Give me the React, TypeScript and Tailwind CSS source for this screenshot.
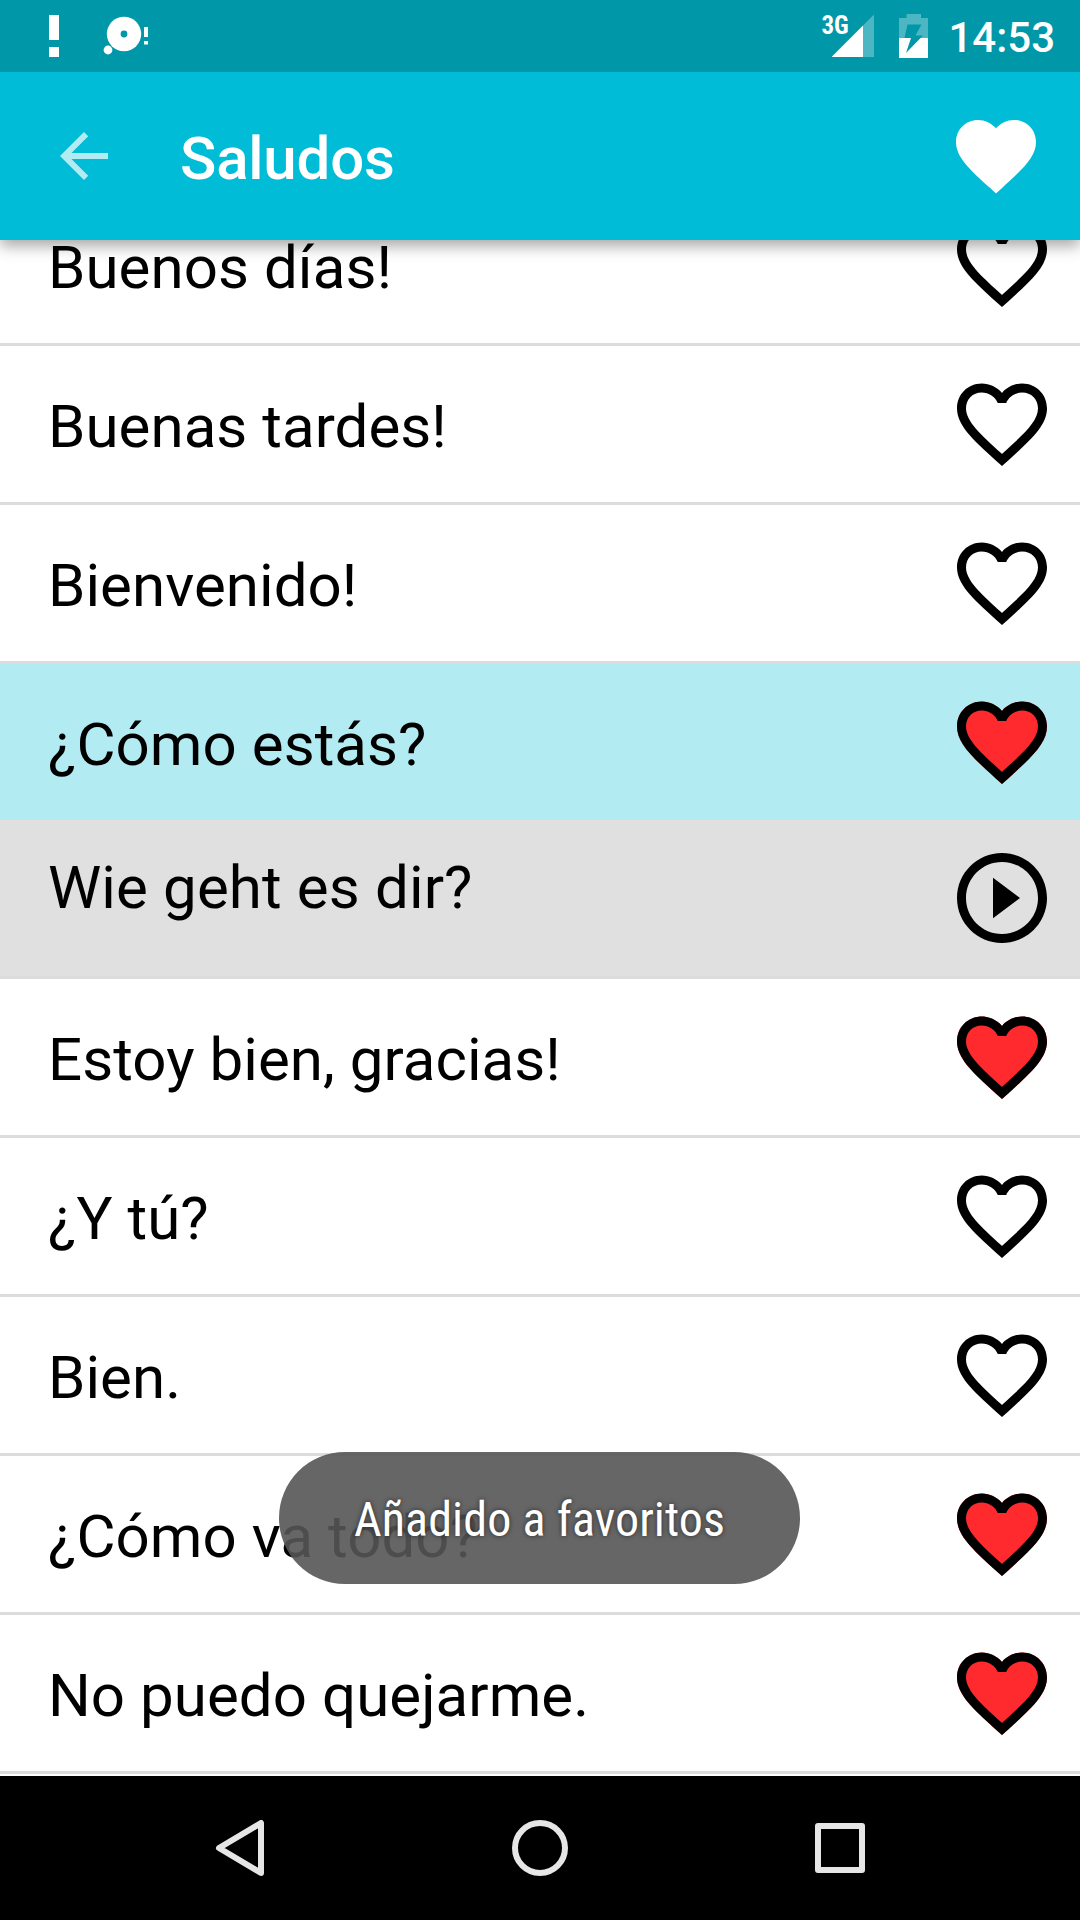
type Phrase = {
  text: string;
  favorite?: boolean;
  selected?: boolean;
  translation?: string;
};

const phrases: Phrase[] = [
  { text: "Buenos días!" },
  { text: "Buenas tardes!" },
  { text: "Bienvenido!" },
  { text: "¿Cómo estás?", favorite: true, selected: true, translation: "Wie geht es dir?" },
  { text: "Estoy bien, gracias!", favorite: true },
  { text: "¿Y tú?" },
  { text: "Bien." },
  { text: "¿Cómo va todo?", favorite: true },
  { text: "No puedo quejarme.", favorite: true },
];

const HEART =
  "M12 21.35l-1.45-1.32C5.4 15.36 2 12.28 2 8.5 2 5.42 4.42 3 7.5 3c1.74 0 3.41.81 4.5 2.09C13.09 3.81 14.76 3 16.5 3 19.58 3 22 5.42 22 8.5c0 3.78-3.4 6.86-8.55 11.54L12 21.35z";
const HEART_BORDER =
  "M16.5 3c-1.74 0-3.41.81-4.5 2.09C10.91 3.81 9.24 3 7.5 3 4.42 3 2 5.42 2 8.5c0 3.78 3.4 6.86 8.55 11.54L12 21.35l1.45-1.32C18.6 15.36 22 12.28 22 8.5 22 5.42 19.58 3 16.5 3zm-4.4 15.55l-.1.1-.1-.1C7.14 14.24 4 11.39 4 8.5 4 6.5 5.5 5 7.5 5c1.54 0 3.04.99 3.57 2.36h1.87C13.46 5.99 14.96 5 16.5 5c2 0 3.5 1.5 3.5 3.5 0 2.89-3.14 5.74-7.9 10.05z";

function FavoriteIcon({ favorite }: { favorite?: boolean }) {
  return (
    <svg className="size-27 shrink-0" viewBox="0 0 24 24" aria-hidden>
      {favorite && <path d={HEART} fill="#ff2a2e" />}
      <path d={HEART_BORDER} />
    </svg>
  );
}

function StatusBar() {
  return (
    <div className="relative z-20 flex h-18 items-start justify-between bg-[#0097a9] pr-[25px] pl-12 text-white">
      <svg className="h-18 w-[110px]" viewBox="48 0 110 72" fill="#fff" aria-hidden>
        <rect x="49" y="15" width="10" height="25" />
        <rect x="49" y="47" width="10" height="10" />
        <circle cx="124" cy="34" r="17.2" />
        <circle cx="124" cy="34" r="3.4" fill="#0097a9" />
        <circle cx="108" cy="50" r="4.4" />
        <rect x="144" y="27" width="4" height="10" />
        <rect x="144" y="41" width="4" height="3.5" />
      </svg>
      <div className="flex">
        <span className="mt-3 h-7 w-[11px] text-[25px] leading-7 font-bold whitespace-nowrap font-stretch-75%">3G</span>
        <svg className="h-18 w-[98px]" viewBox="832 0 98 72" fill="#fff" aria-hidden>
          <path d="M863 25.5l11-11V57h-11z" fillOpacity=".3" />
          <path d="M863 25.5V57h-31.5z" />
          <path d="M906.5 14h14.5v4h7v20h-29V18h7.5z" fillOpacity=".3" />
          <path d="M899 38h29v20h-29z" />
          <path d="M907.5 24.5h14l-6 11h7.5l-17 17.5 5-15h-6.5z" fill="#0097a9" />
        </svg>
        <span className="mt-[10px] ml-[18px] text-[42px] leading-[56px] font-medium">14:53</span>
      </div>
    </div>
  );
}

function AppBar() {
  return (
    <header className="relative z-10 flex h-42 items-center bg-[#00bcd7] pr-9 pl-12 text-white shadow-[0_6px_14px_rgba(0,0,0,0.35)]">
      <svg className="size-18 opacity-70" viewBox="0 0 24 24" fill="#fff" aria-hidden>
        <path d="M20 11H7.83l5.59-5.59L12 4l-8 8 8 8 1.41-1.41L7.83 13H20v-2z" />
      </svg>
      <h1 className="ml-15 grow pt-[5px] text-[60px] leading-[71px] font-medium tracking-[-0.2px]">Saludos</h1>
      <svg className="size-24" viewBox="0 0 24 24" fill="#fff" aria-hidden>
        <path d={HEART} />
      </svg>
    </header>
  );
}

function PhraseRow({ phrase }: { phrase: Phrase }) {
  return (
    <li>
      <div
        className={`flex h-[156px] items-center justify-between pr-6 pl-12 ${
          phrase.selected ? "bg-[#b2ebf2]" : "bg-white"
        }`}
      >
        <span className="pt-[5px]">{phrase.text}</span>
        <FavoriteIcon favorite={phrase.favorite} />
      </div>
      {phrase.translation && (
        <div className="flex h-[156px] justify-between bg-[#e0e0e0] pt-6 pr-6 pl-12">
          <span className="mt-2 tracking-[0.14px]">{phrase.translation}</span>
          <svg className="size-27 shrink-0" viewBox="0 0 24 24" aria-hidden>
            <path d="M10 16.5l6-4.5-6-4.5v9zM12 2C6.48 2 2 6.48 2 12s4.48 10 10 10 10-4.48 10-10S17.52 2 12 2zm0 18c-4.41 0-8-3.59-8-8s3.59-8 8-8 8 3.59 8 8-3.59 8-8 8z" />
          </svg>
        </div>
      )}
      <div className="h-[3px] bg-[#dcdcdc]" />
    </li>
  );
}

function NavigationBar() {
  return (
    <nav className="flex h-36 items-center justify-center gap-[244px] bg-black">
      <svg className="size-14" viewBox="0 0 56 56" fill="none" stroke="#e6e6e6" strokeWidth="6" strokeLinejoin="round" aria-hidden>
        <path d="M49 3v50L7 28z" />
      </svg>
      <svg className="size-14" viewBox="0 0 56 56" fill="none" stroke="#e6e6e6" strokeWidth="6" aria-hidden>
        <circle cx="28" cy="28" r="25" />
      </svg>
      <svg className="size-14" viewBox="0 0 56 56" fill="none" stroke="#e6e6e6" strokeWidth="6" strokeLinejoin="round" aria-hidden>
        <path d="M6 6h44v44H6z" />
      </svg>
    </nav>
  );
}

export default function App() {
  return (
    <div className="relative flex h-[1920px] w-[1080px] flex-col overflow-hidden bg-white font-['Roboto',sans-serif]">
      <StatusBar />
      <AppBar />
      <main className="flex h-[1536px] flex-col justify-end overflow-hidden pb-[2px] text-[60px] leading-[71px] tracking-[0.06px] text-black">
        <ul>
          {phrases.map((phrase) => (
            <PhraseRow key={phrase.text} phrase={phrase} />
          ))}
        </ul>
      </main>
      <NavigationBar />
      <div className="absolute top-[1452px] left-[279px] flex h-[132px] w-[521px] items-center justify-center rounded-full bg-[#555]/90 text-white">
        <span className="pt-1 text-[48px] leading-14 tracking-[0.1px] whitespace-nowrap font-stretch-75% [text-shadow:0_0_5px_rgba(0,0,0,0.6)]">
          Añadido a favoritos
        </span>
      </div>
    </div>
  );
}
